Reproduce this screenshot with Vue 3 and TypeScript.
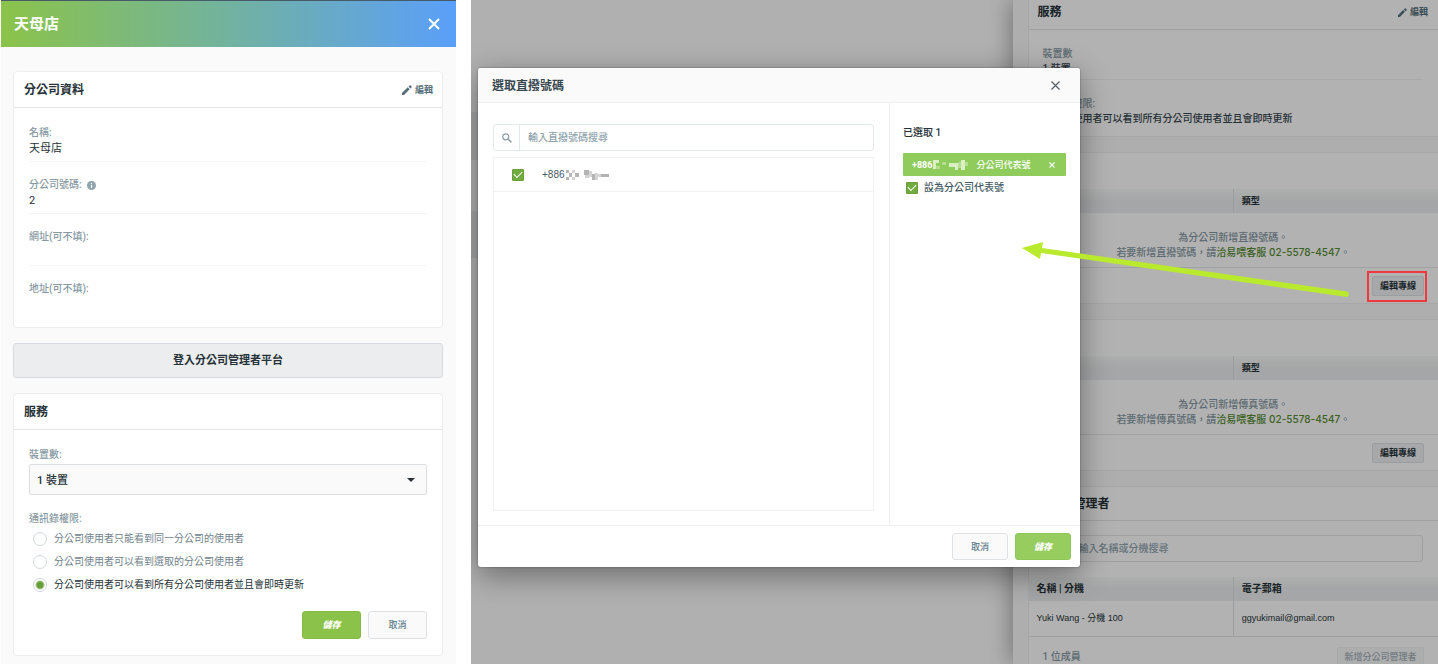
<script setup lang="ts">
import { ref } from 'vue'

interface Field {
  label: string
  value: string
  info?: boolean
}

interface LineCard {
  id: string
  kind: string
}

const fields: Field[] = [
  { label: '名稱:', value: '天母店' },
  { label: '分公司號碼:', value: '2', info: true },
  { label: '網址(可不填):', value: '' },
  { label: '地址(可不填):', value: '' },
]

const permissions: string[] = [
  '分公司使用者只能看到同一分公司的使用者',
  '分公司使用者可以看到選取的分公司使用者',
  '分公司使用者可以看到所有分公司使用者並且會即時更新',
]

const lineCards: LineCard[] = [
  { id: 'direct', kind: '直撥號碼' },
  { id: 'fax', kind: '傳真號碼' },
]

const permission = ref(2)
const devices = ref('1')
const numberPicked = ref(true)
const isMain = ref(true)
const query = ref('')
const memberQuery = ref('')
</script>

<template>
  <div class="page">
    <aside class="panel">
      <header class="panel-head">
        <h1>天母店</h1>
        <button type="button" class="icon-btn" aria-label="關閉">
          <svg width="12" height="12" viewBox="0 0 12 12"><path d="M1 1l10 10M11 1L1 11" stroke="#fff" stroke-width="2" /></svg>
        </button>
      </header>

      <div class="panel-body">
        <section class="card">
          <div class="card-head">
            <h2>分公司資料</h2>
            <button type="button" class="edit">
              <svg width="10" height="10" viewBox="0 0 10 10"><path d="M0 10V8l5.700-5.700 2 2L2 10zM6.500 1.600l1.100-1.100q.500-.500 1 0l.900.900q.500.500 0 1L8.400 3.500z" fill="currentColor" /></svg>
              編輯
            </button>
          </div>
          <dl class="fields">
            <div v-for="f in fields" :key="f.label" class="field">
              <dt>
                {{ f.label }}
                <svg v-if="f.info" width="9" height="9" viewBox="0 0 9 9"><circle cx="4.500" cy="4.500" r="4.500" fill="#90a4ae" /><path d="M4.500 2v1.200M4.500 4v3" stroke="#fff" stroke-width="1.200" /></svg>
              </dt>
              <dd>{{ f.value }}</dd>
            </div>
          </dl>
        </section>

        <button type="button" class="login">登入分公司管理者平台</button>

        <section class="card">
          <div class="card-head"><h2>服務</h2></div>
          <form class="service" @submit.prevent>
            <label class="lbl" for="devices">裝置數:</label>
            <div class="select">
              <select id="devices" v-model="devices">
                <option value="1">1 裝置</option>
              </select>
              <svg width="8" height="4" viewBox="0 0 8 4"><path d="M0 0h8L4 4z" fill="#263238" /></svg>
            </div>
            <fieldset>
              <legend class="lbl">通訊錄權限:</legend>
              <label v-for="(p, i) in permissions" :key="p" class="radio" :class="{ on: permission === i }">
                <input v-model="permission" type="radio" name="permission" :value="i" />
                {{ p }}
              </label>
            </fieldset>
            <div class="actions">
              <button type="submit" class="btn save">儲存</button>
              <button type="button" class="btn cancel">取消</button>
            </div>
          </form>
        </section>
      </div>
    </aside>

    <main class="scene">
      <div class="drawer">
        <section class="block first">
          <div class="block-head">
            <h2>服務</h2>
            <button type="button" class="edit">
              <svg width="9" height="9" viewBox="0 0 10 10"><path d="M0 10V8l5.700-5.700 2 2L2 10zM6.500 1.600l1.100-1.100q.500-.500 1 0l.900.900q.500.500 0 1L8.400 3.500z" fill="currentColor" /></svg>
              編輯
            </button>
          </div>
          <dl class="summary">
            <div>
              <dt>裝置數</dt>
              <dd>1 裝置</dd>
            </div>
            <div>
              <dt>通訊錄權限:</dt>
              <dd>{{ permissions[2] }}</dd>
            </div>
          </dl>
        </section>

        <section v-for="c in lineCards" :key="c.id" class="block lines">
          <table>
            <thead>
              <tr><th scope="col"></th><th scope="col">類型</th></tr>
            </thead>
            <tbody>
              <tr>
                <td colspan="2" class="empty">
                  為分公司新增{{ c.kind }}。<br />若要新增{{ c.kind }}，請<a href="#">洽易喂客服 02-5578-4547</a>。
                </td>
              </tr>
            </tbody>
          </table>
          <div class="block-foot">
            <button type="button" class="small">編輯專線</button>
          </div>
        </section>

        <section class="block">
          <div class="block-head admins"><h2>分公司管理者</h2></div>
          <div class="member-search">
            <input v-model="memberQuery" type="text" aria-label="輸入名稱或分機搜尋" placeholder="輸入名稱或分機搜尋" />
          </div>
          <table class="members">
            <thead>
              <tr><th scope="col">名稱 | 分機</th><th scope="col">電子郵箱</th></tr>
            </thead>
            <tbody>
              <tr><td>Yuki Wang - 分機 100</td><td>ggyukimail@gmail.com</td></tr>
            </tbody>
          </table>
          <div class="member-foot">
            <span>1 位成員</span>
            <button type="button" class="small faded" disabled>新增分公司管理者</button>
          </div>
        </section>
      </div>

      <div class="shade">
        <div class="dialog" role="dialog" aria-labelledby="dialog-title">
          <header class="dialog-head">
            <h2 id="dialog-title">選取直撥號碼</h2>
            <button type="button" class="icon-btn" aria-label="關閉">
              <svg width="9" height="9" viewBox="0 0 9 9"><path d="M.500.500l8 8M8.500.500l-8 8" stroke="#546068" stroke-width="1.200" /></svg>
            </button>
          </header>
          <div class="dialog-body">
            <div class="pick">
              <div class="search">
                <span class="search-icon">
                  <svg width="10" height="10" viewBox="0 0 10 10"><circle cx="3.800" cy="3.800" r="3" fill="none" stroke="#8b9ca6" stroke-width="1.200" /><path d="M6 6l3.400 3.400" stroke="#8b9ca6" stroke-width="1.500" /></svg>
                </span>
                <input v-model="query" type="text" aria-label="輸入直撥號碼搜尋" placeholder="輸入直撥號碼搜尋" />
              </div>
              <div class="list">
                <label class="list-row">
                  <input v-model="numberPicked" type="checkbox" />
                  <span class="number">+886<svg width="45" height="12" viewBox="0 0 45 12" aria-hidden="true">
                    <g fill="#b4b4b4"><path d="M1 1h3v3H1zM4 4h3v4H4zM1 8h3v3H1zM10 4h4v4h-4zM19 1h5v5h-5zM27 5h3v6h-3zM36 5h8v3h-8z" /></g>
                    <g fill="#d4d4d4"><path d="M7 1h3v3H7zM7 8h3v3H7zM24 2h3v6h-3zM20 6h4v3h-4zM30 4h3v7h-3zM33 5h3v3h-3z" /></g>
                  </svg></span>
                </label>
              </div>
            </div>
            <div class="chosen">
              <p>已選取 1</p>
              <div class="chip">
                <b>+886</b><svg class="mosaic" width="40" height="12" viewBox="0 0 40 12" aria-hidden="true">
                  <g fill="#d9efc4"><path d="M1 1h3v9H1zM4 1h3v3H4zM17 4h9v4h-9zM23 8h3v3h-3zM29 1h4v10h-4z" /></g>
                  <g fill="#b5de8d"><path d="M10 3h4v3h-4zM26 3h3v6h-3zM33 3h3v4h-3zM4 7h4v3H4z" /></g>
                </svg>
                <span>分公司代表號</span>
                <button type="button" class="icon-btn" aria-label="移除">
                  <svg width="6" height="6" viewBox="0 0 6 6"><path d="M.500.500l5 5M5.500.500l-5 5" stroke="#fff" stroke-width="1.200" /></svg>
                </button>
              </div>
              <label class="main-number"><input v-model="isMain" type="checkbox" />設為分公司代表號</label>
            </div>
          </div>
          <footer class="dialog-foot">
            <button type="button" class="btn cancel">取消</button>
            <button type="button" class="btn save light">儲存</button>
          </footer>
        </div>
      </div>

      <svg class="markup" width="408" height="64" viewBox="0 0 408 64" aria-hidden="true">
        <path d="M2 8L23 2 22 8 327 51.500A3 3 0 0 1 327 57L21 13 20 19z" fill="#b9ea2e" />
        <rect x="348" y="32" width="58" height="29" fill="none" stroke="#f0383f" stroke-width="2" />
      </svg>
    </main>
  </div>
</template>

<style>
body {
  margin: 0;
  background: #fff;
}
</style>

<style scoped>
.page {
  display: grid;
  grid-template-columns: 456fr 967fr;
  column-gap: 15px;
  height: 100vh;
  font: 10px/16px Roboto, "Noto Sans CJK TC", sans-serif;
  color: #263238;
}
.page *,
.page *::before {
  box-sizing: border-box;
}
h1,
h2,
p,
dl,
dd,
fieldset {
  margin: 0;
  padding: 0;
  border: 0;
}
button,
input,
select {
  font: inherit;
  color: inherit;
  margin: 0;
}
button {
  padding: 0;
  cursor: pointer;
}
h2 {
  font-size: 12px;
  font-weight: 700;
}
.icon-btn {
  display: flex;
  border: 0;
  background: none;
}

.panel {
  margin-left: 1px;
  background: #fafafa;
  border-top: 1px solid #465a68;
  overflow: hidden auto;
}
.panel-head {
  display: flex;
  align-items: center;
  justify-content: space-between;
  height: 46px;
  padding: 0 16px 0 13px;
  background: linear-gradient(90deg, #8bc34a, #74b496 45%, #5a9ffa);
  color: #fff;
}
h1 {
  font-size: 15px;
  font-weight: 700;
}
.panel-body {
  display: flex;
  flex-direction: column;
  gap: 15px;
  padding: 24px 13px 8px 12px;
}
.card {
  background: #fff;
  border: 1px solid #eceeef;
  border-radius: 4px;
}
.card-head {
  display: flex;
  align-items: center;
  justify-content: space-between;
  height: 36px;
  padding: 0 9px 0 10px;
  border-bottom: 1px solid #e2e5e7;
}
.edit {
  display: flex;
  align-items: center;
  gap: 3px;
  border: 0;
  background: none;
  color: #546e7a;
  font-size: 9px;
  font-weight: 700;
}
.fields {
  display: flex;
  flex-direction: column;
  gap: 15px;
  padding: 17px 15px 9px;
}
.field {
  border-bottom: 1px solid #f4f5f5;
  padding-bottom: 4px;
}
.field:last-child {
  border-color: transparent;
}
dt,
.lbl {
  color: #8799a3;
  font-weight: 500;
}
.field dt {
  display: flex;
  align-items: center;
  gap: 5px;
}
.field dd {
  height: 16px;
  font-size: 11px;
}
.login {
  height: 35px;
  border: 1px solid #d7dbdf;
  border-radius: 3px;
  background: #ecedef;
  font-size: 11px;
  font-weight: 700;
}
.service {
  padding: 17px 15px 16px;
}
.lbl {
  display: block;
  padding: 0;
}
.select {
  position: relative;
  height: 31px;
  margin: 1px 0 16px;
}
.select select {
  width: 100%;
  height: 100%;
  padding: 2px 7px 0;
  appearance: none;
  border: 1px solid #dcdfe1;
  border-radius: 2px;
  background: #fafafa;
  font-size: 11px;
  font-weight: 500;
}
.select svg {
  position: absolute;
  right: 12px;
  top: 14px;
  pointer-events: none;
}
.radio {
  display: flex;
  align-items: center;
  gap: 7px;
  height: 23px;
  padding-left: 4px;
  color: #71828c;
}
.radio.on {
  color: #263238;
}
.radio input {
  appearance: none;
  width: 14px;
  height: 14px;
  border: 1px solid #cfd8dc;
  border-radius: 50%;
  background: #fff;
}
.radio input:checked {
  background: radial-gradient(circle, #689f38 3px, #fff 5px);
}
.actions {
  display: flex;
  justify-content: flex-end;
  gap: 7px;
  margin-top: 15px;
}
.btn {
  width: 59px;
  height: 28px;
  border: 1px solid #dde1e3;
  border-radius: 3px;
  font-size: 9px;
}
.cancel {
  background: #fafafa;
  color: #607d8b;
  font-weight: 500;
}
.save {
  background: #8bc34a;
  border-color: #84bb45;
  color: #fff;
  font-weight: 900;
  font-style: italic;
}

.scene {
  position: relative;
  overflow: hidden;
  background: linear-gradient(#fdfdfd 112px, #eceef0 112px 160px, #fdfdfd 160px 211px, #eceef0 211px 258px, #fdfdfd 258px);
}
.drawer {
  display: flex;
  flex-direction: column;
  gap: 15px;
  width: 44%;
  height: 100%;
  margin-left: auto;
  padding-left: 15px;
  background: #fafafa;
  box-shadow: 0 0 24px rgba(0, 0, 0, 0.4);
}
.block {
  flex: none;
  background: #fff;
  border: solid #eff0f1;
  border-width: 1px 0 1px 1px;
}
.block.first {
  border-top: 0;
}
.block-head {
  display: flex;
  align-items: center;
  justify-content: space-between;
  height: 30px;
  padding: 0 10px 5px 9px;
  border-bottom: 1px solid #e2e5e7;
}
.block-head.admins {
  height: 34px;
  padding-bottom: 0;
}
.summary {
  padding: 16px 15px 10px 14px;
}
.summary > div + div {
  padding-top: 16px;
}
.summary > div:first-child {
  border-bottom: 1px solid #f1f3f4;
  padding-bottom: 3px;
}
.summary dt,
.summary dd {
  line-height: 15px;
}
.summary dd {
  color: #37474f;
  font-weight: 500;
}
.lines {
  padding-top: 36px;
}
table {
  width: 100%;
  table-layout: fixed;
  border-collapse: collapse;
}
th {
  height: 24px;
  padding: 0 8px;
  text-align: left;
  font-size: 9px;
  font-weight: 700;
  background: linear-gradient(#f9fafa, #eceeef 50%);
}
th + th,
.members td + td {
  border-left: 1px solid #dde3e6;
}
.empty {
  height: 54px;
  padding: 9px 0 0;
  text-align: center;
  line-height: 15px;
  color: #8799a3;
  font-weight: 500;
}
.empty a {
  color: #558b2f;
  font-family: Inter, "Noto Sans CJK TC", sans-serif;
  text-decoration: none;
}
.block-foot {
  display: flex;
  align-items: center;
  justify-content: flex-end;
  height: 36px;
  padding-right: 14px;
  border-top: 1px solid #e4e8ea;
}
.small {
  width: 52px;
  height: 20px;
  border: 1px solid #dfe2e5;
  border-radius: 2px;
  background: #f0f1f2;
  font-size: 9px;
  font-weight: 700;
  white-space: nowrap;
}
.member-search {
  padding: 14px 15px 15px 14px;
}
.member-search input {
  width: 100%;
  height: 27px;
  padding: 0 35px;
  border: 1px solid #e2e6e8;
  border-radius: 3px;
  background: #fff;
}
input::placeholder {
  color: #90a4ae;
  opacity: 1;
  font-weight: 500;
}
.members th {
  font-size: 10px;
}
.members td {
  height: 35px;
  padding: 0 8px;
  font-family: "Liberation Sans", "Noto Sans CJK TC", sans-serif;
  font-size: 9px;
}
.members {
  border-bottom: 1px solid #e2e6e8;
}
.member-foot {
  display: flex;
  align-items: center;
  justify-content: space-between;
  height: 40px;
  padding: 0 14px;
  color: #8799a3;
  font-weight: 500;
}
.small.faded {
  width: 87px;
  background: #f7f8f8;
  border-color: #f1f2f3;
  color: #a4b0b7;
  font-weight: 500;
}

.shade {
  position: absolute;
  inset: 0;
  z-index: 1;
  display: grid;
  grid-template-columns: 602fr 358fr;
  align-items: start;
  padding: 68px 0 0 7px;
  background: rgba(0, 0, 0, 0.3);
}
.dialog {
  background: #fff;
  border-radius: 3px;
  box-shadow: 0 8px 30px rgba(0, 0, 0, 0.4), 0 0 2px rgba(0, 0, 0, 0.4);
  overflow: hidden;
}
.dialog-head {
  display: flex;
  align-items: center;
  justify-content: space-between;
  height: 35px;
  padding: 1px 20px 0 14px;
  background: #fafafa;
  border-bottom: 1px solid #eff0f0;
}
.dialog-head h2 {
  color: #37474f;
}
.dialog-body {
  display: grid;
  grid-template-columns: 412fr 190fr;
}
.pick {
  padding: 21px 15px 14px;
  border-right: 1px solid #eff1f1;
}
.search {
  display: flex;
  height: 27px;
  border: 1px solid #e3e8ea;
  border-radius: 3px;
}
.search-icon {
  display: flex;
  align-items: center;
  justify-content: center;
  width: 26px;
  border-right: 1px solid #e3e8ea;
}
.search input {
  flex: 1;
  min-width: 0;
  padding: 0 8px;
  border: 0;
  background: none;
}
.list {
  height: 354px;
  margin-top: 6px;
  border: 1px solid #f1f2f2;
}
.list-row {
  display: flex;
  align-items: center;
  gap: 18px;
  height: 34px;
  padding-left: 18px;
  border-bottom: 1px solid #f1f2f2;
  color: #455a64;
}
.number {
  display: flex;
  align-items: center;
  font-family: "Liberation Sans", sans-serif;
}
input[type="checkbox"] {
  appearance: none;
  position: relative;
  flex: none;
  width: 12px;
  height: 12px;
  border-radius: 1px;
  background: #fff;
  border: 1px solid #689f38;
}
input[type="checkbox"]:checked {
  background: #72ab42;
}
input[type="checkbox"]:checked::before {
  content: "";
  position: absolute;
  left: 1px;
  top: 1px;
  width: 8px;
  height: 5px;
  border: solid #fff;
  border-width: 0 0 1px 1px;
  transform: rotate(-45deg);
}
.chosen {
  padding: 22px 14px 0 13px;
}
.chosen p {
  font-weight: 500;
}
.chip {
  display: flex;
  align-items: center;
  height: 23px;
  margin: 12px 0 6px;
  padding: 0 11px 0 9px;
  border-radius: 1px;
  background: #8fcc5c;
  color: #fff;
  font-size: 9px;
  font-weight: 500;
}
.chip .mosaic {
  margin-right: 4px;
}
.chip .icon-btn {
  margin-left: auto;
}
.main-number {
  display: flex;
  align-items: center;
  gap: 6px;
  height: 12px;
  padding-left: 3px;
  color: #455a64;
  font-weight: 500;
}
.dialog-foot {
  display: flex;
  justify-content: flex-end;
  gap: 7px;
  padding: 7px 9px;
  border-top: 1px solid #eff0f0;
}
.dialog-foot .btn {
  width: 56px;
  height: 27px;
}
.dialog-foot .light {
  background: #96cd5e;
  border-color: #8fc75a;
}
.markup {
  position: absolute;
  right: 10px;
  top: 240px;
  z-index: 3;
}
</style>
